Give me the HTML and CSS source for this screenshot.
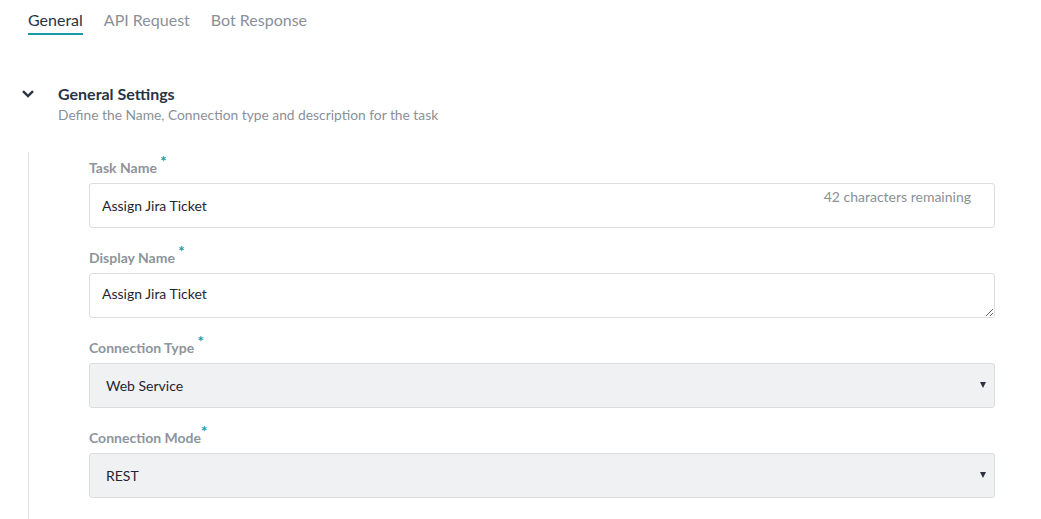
FILE: index.html
```html
<!DOCTYPE html>
<html>
<head>
<meta charset="utf-8">
<link rel="stylesheet" href="styles.css">
</head>
<body>
<nav class="tabs">
  <span class="tab active">General</span>
  <span class="tab">API Request</span>
  <span class="tab">Bot Response</span>
</nav>
<section class="section">
  <div class="section-head">
    <svg class="chevron" width="12" height="8" viewBox="0 0 12 8"><path d="M1 1.2 L6 6 L11 1.2" fill="none" stroke="#2a3344" stroke-width="2.4"/></svg>
    <div>
      <div class="section-title">General Settings</div>
      <div class="section-sub">Define the Name, Connection type and description for the task</div>
    </div>
  </div>
  <div class="section-body">
    <div class="field">
      <label class="label">Task Name <sup class="req">*</sup></label>
      <div class="control-wrap">
        <input class="input" type="text" value="Assign Jira Ticket">
        <span class="remaining">42 characters remaining</span>
      </div>
    </div>
    <div class="field">
      <label class="label">Display Name <sup class="req">*</sup></label>
      <textarea class="input textarea">Assign Jira Ticket</textarea>
    </div>
    <div class="field">
      <label class="label">Connection Type <sup class="req">*</sup></label>
      <div class="control-wrap">
        <select class="select"><option>Web Service</option></select>
        <span class="caret"></span>
      </div>
    </div>
    <div class="field">
      <label class="label">Connection Mode<sup class="req">*</sup></label>
      <div class="control-wrap">
        <select class="select"><option>REST</option></select>
        <span class="caret"></span>
      </div>
    </div>
  </div>
</section>
</body>
</html>
```
FILE: styles.css
```css
html, body {
  margin: 0;
  background: #ffffff;
  font-family: Lato, "Open Sans", sans-serif;
  color: #2a3344;
}
.tabs {
  display: flex;
  gap: 21px;
  padding: 10px 0 0 28px;
}
.tab {
  font-size: 16px;
  line-height: 20px;
  color: #8a9099;
  padding-bottom: 3px;
  border-bottom: 2px solid transparent;
}
.tab.active {
  color: #2a3344;
  border-bottom-color: #1a9aa6;
}
.section {
  margin-top: 49px;
}
.section-head {
  display: flex;
  align-items: flex-start;
}
.chevron {
  margin: 6px 24px 0 22px;
}
.section-title {
  font-size: 16px;
  font-weight: 700;
  line-height: 20px;
  color: #2a3344;
}
.section-sub {
  font-size: 13.8px;
  line-height: 18px;
  color: #8a9099;
  margin-top: 2px;
}
.section-body {
  margin: 28px 46px 0 28px;
  border-left: 1px solid #e3e4e6;
  padding: 6px 0 20px 60px;
}
.field {
  margin-bottom: 20px;
}
.label {
  display: block;
  font-size: 14px;
  font-weight: 700;
  line-height: 20px;
  color: #8e949c;
  margin-bottom: 5px;
}
.req {
  color: #1a9aa6;
  font-size: 15px;
  vertical-align: 6px;
  line-height: 0;
  font-weight: 700;
}
.control-wrap {
  position: relative;
}
.input {
  display: block;
  box-sizing: border-box;
  width: 100%;
  height: 45px;
  margin: 0;
  border: 1px solid #dcdddf;
  border-radius: 3px;
  padding: 0 12px;
  font-family: Lato, "Open Sans", sans-serif;
  font-size: 14px;
  color: #1f2633;
  background: #fff;
  outline: none;
}
.textarea {
  padding: 11px 12px;
  line-height: 18px;
  resize: vertical;
}
.remaining {
  position: absolute;
  right: 24px;
  top: 6px;
  font-size: 14px;
  line-height: 16px;
  color: #8a9099;
}
.select {
  display: block;
  box-sizing: border-box;
  width: 100%;
  height: 45px;
  margin: 0;
  -webkit-appearance: none;
  appearance: none;
  border: 1px solid #dcdddf;
  border-radius: 3px;
  padding: 0 16px;
  background: #f0f1f3;
  font-family: Lato, "Open Sans", sans-serif;
  font-size: 14px;
  color: #1f2633;
  outline: none;
}
.caret {
  position: absolute;
  right: 9px;
  top: 19px;
  width: 0;
  height: 0;
  border-left: 3.5px solid transparent;
  border-right: 3.5px solid transparent;
  border-top: 6px solid #2a3344;
  pointer-events: none;
}
```
